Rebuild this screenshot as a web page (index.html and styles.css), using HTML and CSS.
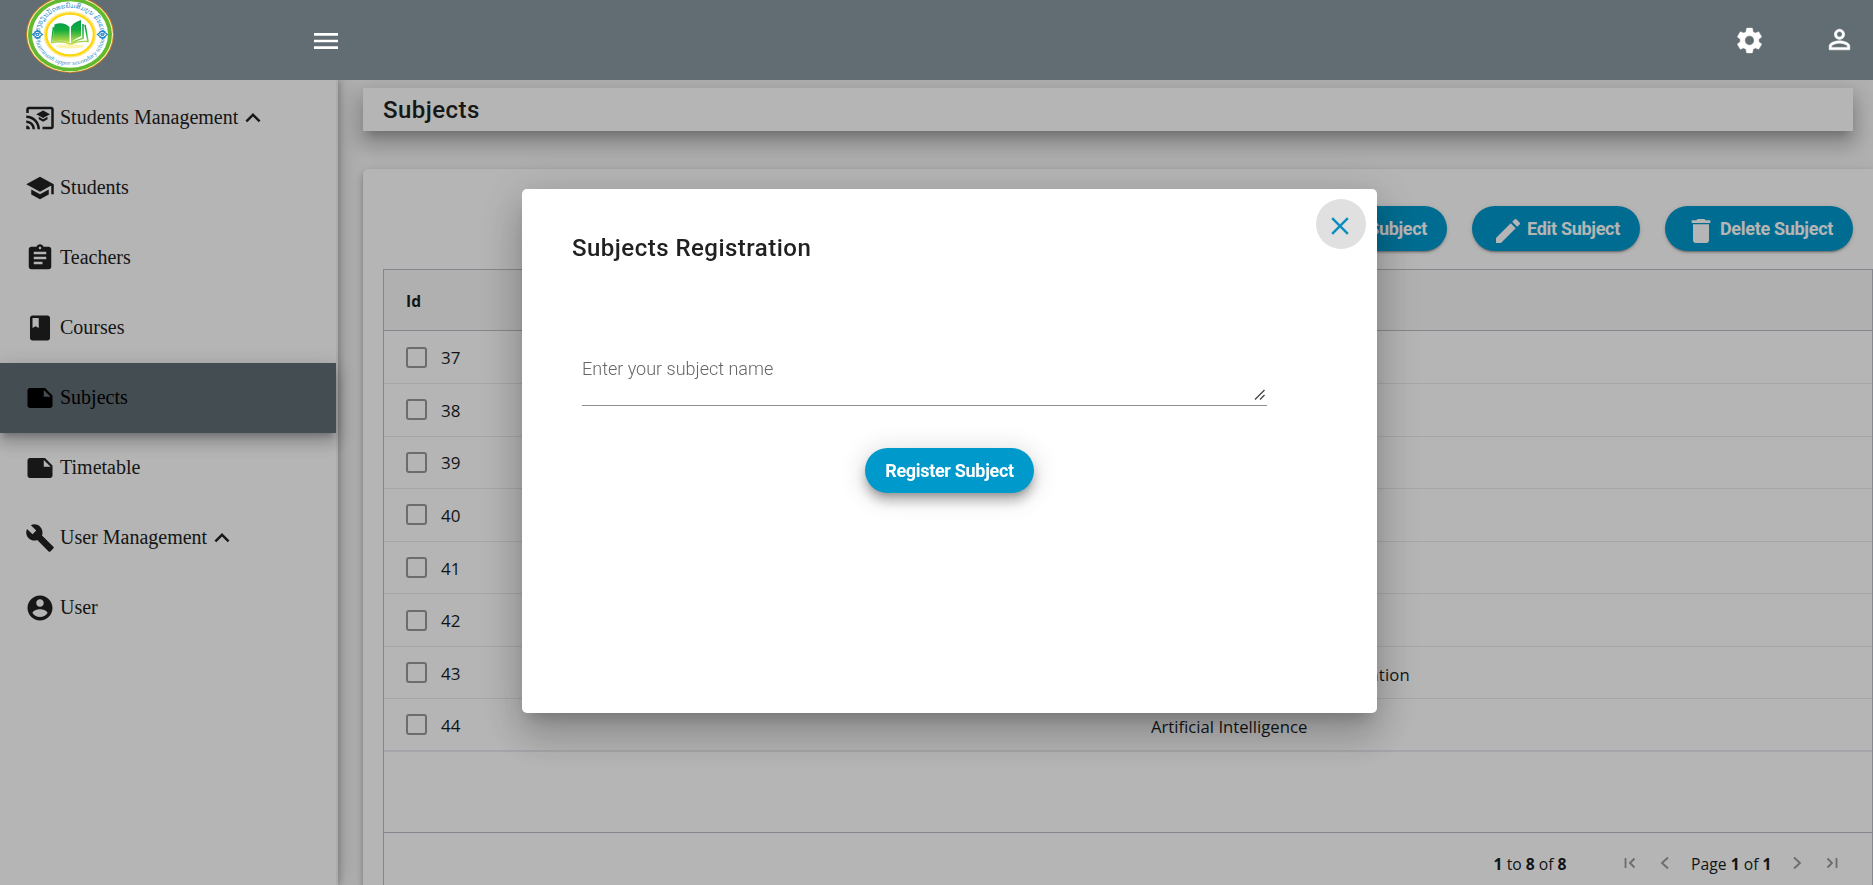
FILE: index.html
```html
<!DOCTYPE html>
<html lang="en">
<head>
<meta charset="utf-8">
<title>Subjects</title>
<link rel="stylesheet" href="styles.css">
</head>
<body>
<svg class="defs" width="0" height="0">
  <symbol id="note" viewBox="0 0 24 24"><path d="M22 10l-6-6H4c-1.100 0-2 .9-2 2v12.010c0 1.100.9 1.990 2 1.990l16-.010c1.100 0 2-.89 2-1.990v-8zm-7-4.500l5.500 5.500H15V5.500z"/></symbol>
  <symbol id="expand" viewBox="0 0 24 24"><path d="M12 8l-6 6 1.410 1.410L12 10.830l4.590 4.580L18 14z"/></symbol>
</svg>
<div class="app">
  <header class="topbar">
    <svg class="logo" viewBox="0 0 88 88" preserveAspectRatio="none">
      <defs>
        <path id="arcTop" d="M13.500 44a30.500 30.500 0 0 1 61 0"/>
        <path id="arcBottom" d="M9 44a35 35 0 0 0 70 0"/>
        <linearGradient id="leaf" x1="0" y1="0" x2="0" y2="1"><stop offset="0" stop-color="#009a4e"/><stop offset=".45" stop-color="#16ae3c"/><stop offset="1" stop-color="#d5e04a"/></linearGradient>
      </defs>
      <circle cx="44" cy="44" r="44" fill="#c9781c"/>
      <circle cx="44" cy="44" r="43" fill="#fbf6c8"/>
      <circle cx="44" cy="44" r="42" fill="#62b92e"/>
      <circle cx="44" cy="44" r="38" fill="#fff"/>
      <circle cx="44" cy="44" r="25.500" fill="#fff" stroke="#ffe98a" stroke-width="2"/>
      <circle cx="44" cy="44" r="23.800" fill="#fff" stroke="#ffd60a" stroke-width="2.200"/>
      <text class="seal lao" text-anchor="middle"><textPath href="#arcTop" startOffset="50%">ໂຮງຮຽນມັດທະຍົມສົມບູນ ຄົນແດງ</textPath></text>
      <text class="seal latin" text-anchor="middle"><textPath href="#arcBottom" startOffset="50%">Phonmixath upper secondary school</textPath></text>
      <g fill="none" stroke="#2786c8" stroke-width="1.200">
        <path d="M6.500 44l5-4.500 5 4.500-5 4.500zM8.500 40.500h6M8.500 47.500h6"/><circle cx="11.500" cy="44" r="1.400"/>
        <path d="M71.500 44l5-4.500 5 4.500-5 4.500zM73.500 40.500h6M73.500 47.500h6"/><circle cx="76.500" cy="44" r="1.400"/>
      </g>
      <ellipse cx="44" cy="57.500" rx="14" ry="2.500" fill="#fff3b0"/>
      <path fill="url(#leaf)" d="M28.500 32.500C34 30 40 31 43.500 35.500V54C39 50.500 33 50.500 26.500 52.500zM45 35.500C48 30 52 29 55 27.500V46C51 47.500 47.500 50 45 54z"/>
      <path fill="none" stroke="url(#leaf)" stroke-width="1.500" d="M27.500 35.500L25.500 53.500C33 51.500 39 52 44 55 48 51.500 52 50 57 48.500V32M59 33l3 19C55 51.500 49 52.500 45 55.500"/>
    </svg>
    <svg class="menu" viewBox="0 0 24 24"><path d="M3 18h18v-2H3v2zm0-5h18v-2H3v2zm0-7v2h18V6H3z"/></svg>
    <svg class="gear" viewBox="0 0 24 24"><path d="M19.140 12.940c.04-.3.060-.61.060-.94 0-.32-.020-.64-.070-.94l2.030-1.580c.18-.14.230-.41.120-.61l-1.920-3.320c-.12-.22-.37-.29-.59-.22l-2.390.96c-.5-.38-1.030-.7-1.620-.94l-.36-2.540c-.04-.24-.24-.41-.48-.41h-3.840c-.24 0-.43.170-.47.410l-.36 2.540c-.59.240-1.130.57-1.620.94l-2.390-.96c-.22-.08-.47 0-.59.220L2.740 8.870c-.12.210-.08.470.12.610l2.030 1.580c-.05.300-.09.630-.09.940s.020.640.070.940l-2.030 1.580c-.18.140-.23.410-.12.610l1.920 3.320c.12.220.37.290.59.220l2.390-.96c.5.380 1.030.7 1.620.94l.36 2.540c.05.240.24.410.48.410h3.840c.24 0 .44-.17.470-.41l.36-2.540c.59-.24 1.130-.56 1.620-.94l2.390.96c.22.080.47 0 .59-.22l1.920-3.320c.12-.22.070-.47-.12-.61l-2.010-1.580zM12 15.600c-1.980 0-3.600-1.620-3.600-3.600s1.620-3.600 3.600-3.600 3.600 1.620 3.600 3.600-1.620 3.600-3.600 3.600z"/></svg>
    <svg class="person" viewBox="0 0 24 24"><path d="M12 5.900c1.160 0 2.100.94 2.100 2.100s-.94 2.100-2.100 2.100S9.900 9.160 9.900 8s.94-2.100 2.100-2.100m0 9c2.970 0 6.100 1.460 6.100 2.100v1.100H5.900V17c0-.64 3.130-2.100 6.100-2.100M12 4C9.790 4 8 5.790 8 8s1.790 4 4 4 4-1.790 4-4-1.790-4-4-4zm0 9c-2.670 0-8 1.340-8 4v3h16v-3c0-2.660-5.330-4-8-4z"/></svg>
  </header>
  <div class="body">
    <nav class="sidebar">
      <a class="item"><svg viewBox="0 0 24 24"><path d="M21 3H3c-1.100 0-2 .9-2 2v3h2V5h18v14h-7v2h7c1.100 0 2-.9 2-2V5c0-1.100-.9-2-2-2zM1 18v3h3c0-1.660-1.340-3-3-3zm0-4v2c2.760 0 5 2.240 5 5h2c0-3.870-3.130-7-7-7zm0-4v2c4.970 0 9 4.030 9 9h2c0-6.080-4.930-11-11-11zm10 1.090v2L14.500 15l3.500-1.910v-2L14.500 13 11 11.090zM14.500 6L9 9l5.500 3L20 9l-5.500-3z"/></svg><span>Students Management</span><svg><use href="#expand"/></svg></a>
      <a class="item"><svg viewBox="0 0 24 24"><path d="M5 13.180v4L12 21l7-3.820v-4L12 17l-7-3.820zM12 3L1 9l11 6 9-4.910V17h2V9L12 3z"/></svg><span>Students</span></a>
      <a class="item"><svg viewBox="0 0 24 24"><path d="M19 3h-4.180C14.400 1.840 13.300 1 12 1c-1.300 0-2.400.84-2.820 2H5c-1.100 0-2 .9-2 2v14c0 1.100.9 2 2 2h14c1.100 0 2-.9 2-2V5c0-1.100-.9-2-2-2zm-7 0c.55 0 1 .45 1 1s-.45 1-1 1-1-.45-1-1 .45-1 1-1zm2 14H7v-2h7v2zm3-4H7v-2h10v2zm0-4H7V7h10v2z"/></svg><span>Teachers</span></a>
      <a class="item"><svg viewBox="0 0 24 24"><path d="M18 2H6c-1.100 0-2 .9-2 2v16c0 1.100.9 2 2 2h12c1.100 0 2-.9 2-2V4c0-1.100-.9-2-2-2zM6 4h5v8l-2.500-1.500L6 12V4z"/></svg><span>Courses</span></a>
      <a class="item active"><svg><use href="#note"/></svg><span>Subjects</span></a>
      <a class="item"><svg><use href="#note"/></svg><span>Timetable</span></a>
      <a class="item"><svg viewBox="0 0 24 24"><path d="M22.700 19l-9.100-9.100c.9-2.300.4-5-1.500-6.900-2-2-5-2.400-7.400-1.300L9 6 6 9 1.600 4.700C.4 7.100.9 10.100 2.900 12.100c1.900 1.900 4.600 2.400 6.900 1.500l9.100 9.100c.4.400 1 .4 1.400 0l2.300-2.300c.5-.4.500-1.100.1-1.400z"/></svg><span>User Management</span><svg><use href="#expand"/></svg></a>
      <a class="item"><svg viewBox="0 0 24 24"><path d="M12 2C6.480 2 2 6.480 2 12s4.480 10 10 10 10-4.480 10-10S17.520 2 12 2zm0 3c1.660 0 3 1.340 3 3s-1.340 3-3 3-3-1.340-3-3 1.340-3 3-3zm0 14.200c-2.500 0-4.710-1.280-6-3.220.03-1.990 4-3.080 6-3.080 1.990 0 5.970 1.090 6 3.080-1.290 1.940-3.500 3.220-6 3.220z"/></svg><span>User</span></a>
    </nav>
    <main class="content">
      <h1 class="title">Subjects</h1>
      <section class="card">
        <div class="actions">
          <button class="btn"><svg viewBox="0 0 24 24"><path d="M19 13h-6v6h-2v-6H5v-2h6V5h2v6h6v2z"/></svg><span>Add Subject</span></button>
          <button class="btn"><svg viewBox="0 0 24 24"><path d="M3 17.250V21h3.750L17.810 9.940l-3.750-3.750L3 17.250zM20.710 7.040c.39-.39.390-1.020 0-1.410l-2.340-2.340c-.39-.39-1.020-.39-1.410 0l-1.830 1.830 3.750 3.750 1.830-1.830z"/></svg><span>Edit Subject</span></button>
          <button class="btn"><svg viewBox="0 0 24 24"><path d="M6 19c0 1.100.9 2 2 2h8c1.100 0 2-.9 2-2V7H6v12zM19 4h-3.500l-1-1h-5l-1 1H5v2h14V4z"/></svg><span>Delete Subject</span></button>
        </div>
        <div class="grid">
          <div class="grid-head">Id</div>
          <div class="rows">
            <div class="row"><i class="check"></i><span class="id">37</span></div>
            <div class="row"><i class="check"></i><span class="id">38</span></div>
            <div class="row"><i class="check"></i><span class="id">39</span></div>
            <div class="row"><i class="check"></i><span class="id">40</span></div>
            <div class="row"><i class="check"></i><span class="id">41</span></div>
            <div class="row"><i class="check"></i><span class="id">42</span></div>
            <div class="row"><i class="check"></i><span class="id">43</span><span class="name long">Administration</span></div>
            <div class="row"><i class="check"></i><span class="id">44</span><span class="name">Artificial Intelligence</span></div>
          </div>
          <div class="pager">
            <span class="summary"><b>1</b> to <b>8</b> of <b>8</b></span>
            <svg viewBox="0 0 16 16"><path d="M3.500 3v10M12.500 3.500L8 8l4.500 4.500"/></svg>
            <svg viewBox="0 0 16 16"><path d="M11 2.500L5 8l6 5.500"/></svg>
            <span class="page">Page <b>1</b> of <b>1</b></span>
            <svg viewBox="0 0 16 16"><path d="M5 2.500L11 8l-6 5.500"/></svg>
            <svg viewBox="0 0 16 16"><path d="M12.500 3v10M3.500 3.500L8 8l-4.500 4.500"/></svg>
          </div>
        </div>
      </section>
    </main>
  </div>
</div>
<div class="backdrop"></div>
<div class="dialog">
  <button class="close"><svg viewBox="0 0 24 24"><path d="M19 6.410L17.590 5 12 10.590 6.410 5 5 6.410 10.590 12 5 17.590 6.410 19 12 13.410 17.590 19 19 17.590 13.410 12z"/></svg></button>
  <h2>Subjects Registration</h2>
  <div class="field"><span class="ph">Enter your subject name</span><svg class="grip" viewBox="0 0 12 12"><path d="M1 10.500L10.500 1M6 10.500L10.500 6"/></svg></div>
  <button class="btn register">Register Subject</button>
</div>
</body>
</html>
```
FILE: styles.css
```css
* { box-sizing: border-box; }
body { margin: 0; height: 885px; overflow: hidden; font-family: Roboto, sans-serif; background: #fff; }
.defs { position: absolute; }
svg { flex: none; display: block; }
.app { height: 885px; display: flex; flex-direction: column; }

.topbar { position: relative; z-index: 3; flex: none; height: 80px; background: #626d73; display: flex; align-items: flex-start; fill: #fff; overflow: hidden; }
.logo { width: 88px; height: 77px; margin: -4px 0 0 26px; }
.menu { width: 32px; height: 32px; margin: 25px 0 0 196px; }
.gear { width: 31px; height: 31px; margin: 25px 0 0 auto; stroke: #fff; stroke-width: .3; }
.person { width: 31px; height: 31px; margin: 24px 18px 0 59px; stroke: #fff; stroke-width: .4; }
.seal { fill: #3a92cb; }
.lao { font: 7px "DejaVu Sans", sans-serif; }
.latin { font: italic 7px "Liberation Serif", serif; }

.body { flex: 1; min-height: 0; display: flex; }
.sidebar { position: relative; z-index: 1; flex: none; width: 338px; padding: 3px 0 0; background: #fff; border-right: 2px solid #f2f2f2; box-shadow: 2px 0 6px rgba(0,0,0,.2), 4px 0 22px rgba(0,0,0,.16); }
.item { height: 70px; padding-left: 25px; display: flex; align-items: center; color: #212121; fill: #212121; font: 20px "Liberation Serif", serif; }
.item svg { width: 30px; height: 30px; }
.item span { margin: 0 0 2px 5px; }
.active { background: #616d74; color: #000; fill: #000; box-shadow: 0 6px 6px -3px rgba(0,0,0,.2), 0 10px 14px 1px rgba(0,0,0,.14), 0 4px 18px 3px rgba(0,0,0,.12); }

.content { flex: 1; min-width: 0; padding: 8px 0 0 25px; background: #f8f8f8; display: flex; flex-direction: column; overflow: hidden; }
.title { flex: none; height: 43px; margin: 0 20px 38px 0; padding-left: 20px; background: #fff; color: #212121; font-size: 24px; font-weight: 500; line-height: 44px; letter-spacing: .45px; box-shadow: 0 8px 9px -5px rgba(0,0,0,.2), 0 15px 22px 2px rgba(0,0,0,.14), 0 6px 18px 5px rgba(0,0,0,.12); }
.card { flex: 1; padding: 37px 0 0 20px; background: #fff; border-radius: 5px 0 0 0; display: flex; flex-direction: column; box-shadow: 0 3px 5px rgba(0,0,0,.2), 0 3px 12px rgba(0,0,0,.16); }
.actions { display: flex; justify-content: flex-end; gap: 25px; padding-right: 20px; }
.btn { height: 45px; padding: 0 20px; border: 0; border-radius: 23px; background: #09c; color: #fff; fill: #fff; font: 700 18px Roboto, sans-serif; letter-spacing: -.31px; white-space: nowrap; display: flex; align-items: center; box-shadow: 0 3px 1px -2px rgba(0,0,0,.2), 0 2px 2px rgba(0,0,0,.14), 0 1px 5px rgba(0,0,0,.12); }
.btn svg { width: 32px; height: 32px; margin: 4px 3px 0 0; }

.grid { flex: 1; margin-top: 18px; border: solid #babfc7; border-width: 1px 1px 0; display: flex; flex-direction: column; font-family: "Open Sans", sans-serif; color: #181d1f; }
.grid-head { flex: none; height: 61px; padding-left: 22px; background: #f8f8f8; border-bottom: 1px solid #babfc7; font-size: 15.500px; font-weight: 700; line-height: 63px; }
.rows { flex: none; height: 502px; padding-top: .5px; border-bottom: 1px solid #babfc7; }
.row { height: 52.570px; padding-left: 22px; border-bottom: 1px solid #e8eaee; display: flex; align-items: center; font-size: 17px; }
.row:last-child { border-bottom-width: 2px; }
.check { flex: none; width: 21px; height: 21px; border: 2px solid #999; border-radius: 3px; }
.id { width: 55px; margin: 1px 0 0 14px; }
.name { margin: 3px 0 0 655px; font-size: 16.700px; }
.long { width: 259px; text-align: right; letter-spacing: .2px; }
.pager { display: flex; align-items: center; height: 62px; font-size: 15.700px; padding-right: 32px; justify-content: flex-end; }
.pager svg { width: 16px; height: 16px; margin-top: -2px; fill: none; stroke: #999; stroke-width: 1.800; }
.summary { margin-right: 55px; }
.page { margin: 0 17px 0 18px; }
.pager svg + svg { margin-left: 19.500px; }

.backdrop { position: fixed; inset: 0; z-index: 2; background: rgba(0,0,0,.29); }
.dialog { position: fixed; z-index: 4; left: 522px; top: 189px; width: 855px; height: 524px; padding: 44px 50px; border-radius: 5px; background: #fff; box-shadow: 0 11px 15px -7px rgba(0,0,0,.2), 0 24px 38px 3px rgba(0,0,0,.14), 0 9px 46px 8px rgba(0,0,0,.12); }
.dialog h2 { margin: 0; color: #212121; font-size: 24px; font-weight: 500; line-height: 30px; letter-spacing: .48px; }
.close { position: absolute; top: 10px; right: 11px; width: 50px; height: 50px; padding: 3px 2px 0 0; border: 0; border-radius: 50%; background: #e0e0e0; fill: #0c8fbe; display: grid; place-items: center; }
.close svg { width: 30px; height: 30px; }
.field { width: 685px; height: 50px; margin: 93px 0 0 10px; border-bottom: 1px solid #8e8e8e; display: flex; justify-content: space-between; font-size: 18px; font-weight: 300; color: #666; }
.ph { line-height: 25px; }
.grip { align-self: flex-end; width: 12px; height: 12px; margin: 0 1px 4px 0; fill: none; stroke: #444; stroke-width: 1.300; }
.register { margin: 42px auto 0; box-shadow: 0 5px 5px -3px rgba(0,0,0,.2), 0 8px 10px 1px rgba(0,0,0,.2), 0 3px 24px 4px rgba(0,0,0,.12); }
```
